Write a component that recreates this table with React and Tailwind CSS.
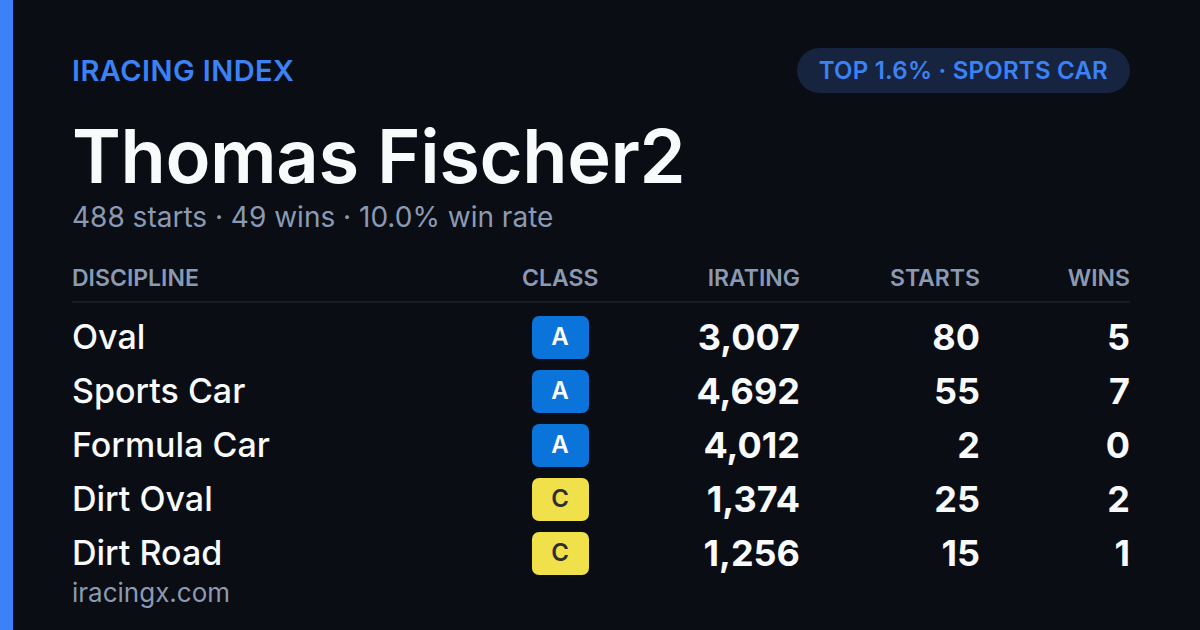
import React from "react"

const rows = [
  { name: "Oval", cls: "A", irating: "3,007", starts: 80, wins: 5 },
  { name: "Sports Car", cls: "A", irating: "4,692", starts: 55, wins: 7 },
  { name: "Formula Car", cls: "A", irating: "4,012", starts: 2, wins: 0 },
  { name: "Dirt Oval", cls: "C", irating: "1,374", starts: 25, wins: 2 },
  { name: "Dirt Road", cls: "C", irating: "1,256", starts: 15, wins: 1 }
]

const grid = "grid grid-cols-[450px_76px_202px_180px_150px] items-center"

function ClassBadge({ cls }) {
  // A = blue, C = yellow
  const tone = cls === "A" ? "bg-[#0b74da] text-white" : "bg-[#f0e14a] text-[#2f2f2f]"
  return (
    <div className={`mx-auto flex h-[43px] w-[57px] items-center justify-center rounded-[7px] text-[24px] font-semibold leading-none ${tone}`}>
      {cls}
    </div>
  )
}

export default function App() {
  return (
    <div
      className="flex h-[630px] w-[1200px] overflow-hidden bg-[#0a0d14]"
      style={{ fontFamily: "Inter, 'Open Sans', sans-serif" }}
    >
      <div className="w-[13px] shrink-0 bg-[#3b82f6]" />
      <div className="flex flex-1 flex-col pl-[59px] pr-[70px] pt-[48px]">
        <div className="flex h-[45px] items-center justify-between">
          <span className="text-[29px] font-semibold leading-none tracking-[0.015em] text-[#3b82f6]">IRACING INDEX</span>
          <span className="flex h-[45px] items-center rounded-full bg-[#172440] px-[22px] text-[24px] font-semibold leading-none tracking-[0.01em] text-[#3b82f6]">
            TOP 1.6% · SPORTS CAR
          </span>
        </div>

        <h1 className="mt-[26px] text-[74px] font-semibold leading-none tracking-[-0.005em] text-[#f8fafc]">Thomas Fischer2</h1>
        <p className="mt-[10px] text-[28px] leading-none text-[#8b9ab3]">488 starts · 49 wins · 10.0% win rate</p>

        <div className={`${grid} mt-[36px] border-b-2 border-[#161b26] pb-[11px] text-[23px] font-semibold leading-none text-[#8b9ab3]`}>
          <span>DISCIPLINE</span>
          <span className="text-center">CLASS</span>
          <span className="text-right">IRATING</span>
          <span className="text-right">STARTS</span>
          <span className="text-right">WINS</span>
        </div>

        <div className="mt-[7px]">
          {rows.map(row => (
            <div key={row.name} className={`${grid} h-[54px] text-[#f8fafc]`}>
              <span className="text-[34px] font-medium leading-none">{row.name}</span>
              <ClassBadge cls={row.cls} />
              <span className="text-right text-[36px] font-bold leading-none">{row.irating}</span>
              <span className="text-right text-[36px] font-bold leading-none">{row.starts}</span>
              <span className="text-right text-[36px] font-bold leading-none">{row.wins}</span>
            </div>
          ))}
        </div>

        <p className="text-[26px] leading-none text-[#8b9ab3]">iracingx.com</p>
      </div>
    </div>
  )
}
